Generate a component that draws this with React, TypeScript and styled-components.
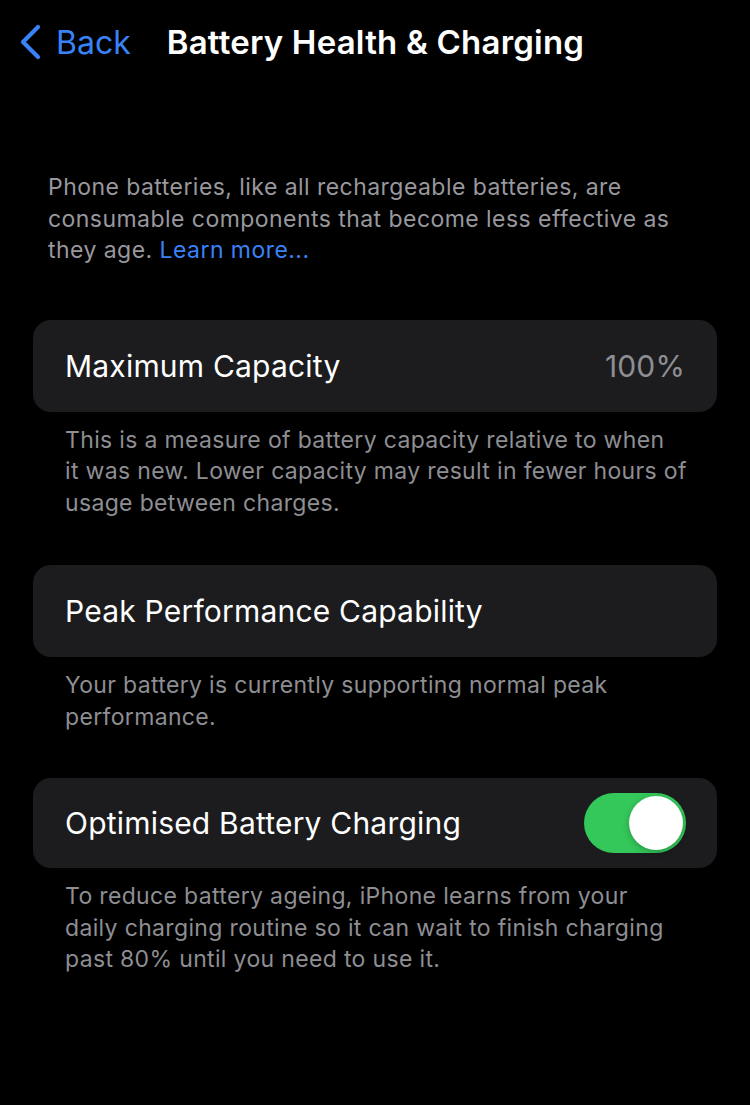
import React, { useState } from 'react';
import styled, { createGlobalStyle } from 'styled-components';

const GlobalStyle = createGlobalStyle`
  html, body {
    margin: 0;
    padding: 0;
    background: #000;
  }
  body {
    font-family: Inter, "Noto Sans", "Liberation Sans", sans-serif;
    -webkit-font-smoothing: antialiased;
  }
`;

const Page = styled.div`
  width: 750px;
  min-height: 1105px;
  background: #000;
  color: #fff;
  box-sizing: border-box;
  padding-bottom: 40px;
`;

const NavBar = styled.div`
  height: 84px;
  display: flex;
  align-items: center;
  padding-left: 18px;
`;

const BackButton = styled.button`
  display: flex;
  align-items: center;
  gap: 14px;
  background: none;
  border: none;
  padding: 0;
  color: #3a82f7;
  font-family: inherit;
  font-size: 32px;
  cursor: pointer;
  margin-right: 36px;
`;

const Title = styled.h1`
  margin: 0;
  font-size: 33px;
  font-weight: 600;
  letter-spacing: 0.2px;
  color: #fff;
`;

const Intro = styled.p`
  margin: 88px 0 0;
  padding: 0 48px;
  font-size: 23px;
  letter-spacing: 0.45px;
  line-height: 31.5px;
  color: #98989e;
`;

const Link = styled.a`
  color: #3a82f7;
  text-decoration: none;
`;

const Section = styled.section<{ $gap: number }>`
  margin: ${p => p.$gap}px 33px 0;
`;

const Card = styled.div<{ $h: number }>`
  height: ${p => p.$h}px;
  background: #1c1c1e;
  border-radius: 18px;
  display: flex;
  align-items: center;
  justify-content: space-between;
  padding: 0 32px;
  box-sizing: border-box;
`;

const Label = styled.span`
  font-size: 30px;
  letter-spacing: 0.2px;
  color: #fff;
`;

const Value = styled.span`
  font-size: 30px;
  letter-spacing: 0.15px;
  color: #8e8e93;
`;

const Footer = styled.p`
  margin: 13px 0 0;
  padding: 0 28px 0 32px;
  font-size: 23px;
  letter-spacing: 0.34px;
  line-height: 31.5px;
  color: #8e8e93;
`;

const Switch = styled.button<{ $on: boolean }>`
  width: 102px;
  height: 60px;
  border-radius: 30px;
  border: none;
  padding: 3px;
  box-sizing: border-box;
  background: ${p => (p.$on ? '#34c759' : '#39393d')};
  display: flex;
  justify-content: ${p => (p.$on ? 'flex-end' : 'flex-start')};
  cursor: pointer;
  margin-right: -1px;
`;

const Knob = styled.span`
  width: 54px;
  height: 54px;
  border-radius: 50%;
  background: #fff;
  box-shadow: 0 2px 6px rgba(0, 0, 0, 0.25);
`;

const Chevron = () => (
  <svg width="24" height="36" viewBox="0 0 24 36" fill="none">
    <path d="M20 3 L5 18 L20 33" stroke="#3a82f7" strokeWidth="4.2" strokeLinecap="round" strokeLinejoin="round" />
  </svg>
);

export default function App() {
  const [optimised, setOptimised] = useState(true);

  return (
    <Page>
      <GlobalStyle />
      <NavBar>
        <BackButton>
          <Chevron />
          Back
        </BackButton>
        <Title>Battery Health &amp; Charging</Title>
      </NavBar>

      <Intro>
        Phone batteries, like all rechargeable batteries, are consumable components that become less
        effective as they age. <Link href="#">Learn more...</Link>
      </Intro>

      <Section $gap={53}>
        <Card $h={92}>
          <Label>Maximum Capacity</Label>
          <Value>100%</Value>
        </Card>
        <Footer>
          This is a measure of battery capacity relative to when
          <br />
          it was new. Lower capacity may result in fewer hours of usage between charges.
        </Footer>
      </Section>

      <Section $gap={46}>
        <Card $h={92}>
          <Label>Peak Performance Capability</Label>
        </Card>
        <Footer>Your battery is currently supporting normal peak performance.</Footer>
      </Section>

      <Section $gap={45}>
        <Card $h={90}>
          <Label>Optimised Battery Charging</Label>
          <Switch $on={optimised} onClick={() => setOptimised(v => !v)} aria-label="Optimised Battery Charging">
            <Knob />
          </Switch>
        </Card>
        <Footer>
          To reduce battery ageing, iPhone learns from your
          <br />
          daily charging routine so it can wait to finish charging
          <br />
          past 80% until you need to use it.
        </Footer>
      </Section>
    </Page>
  );
}
